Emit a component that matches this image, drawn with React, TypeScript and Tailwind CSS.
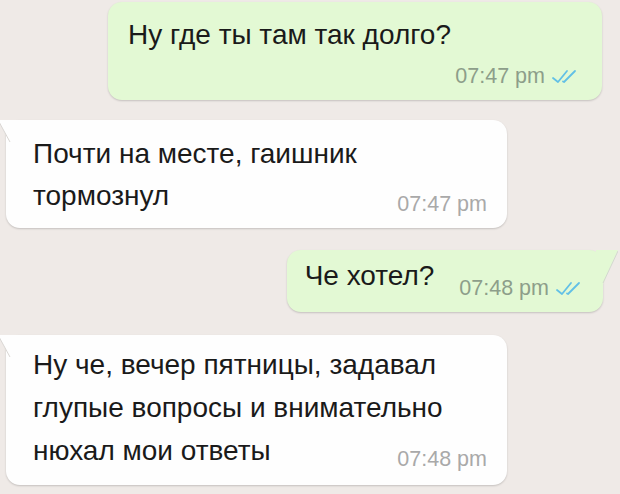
import React from "react";

const font = { fontFamily: '"Liberation Sans", Arial, sans-serif' };

function Ticks() {
  return (
    <svg width="30" height="15" viewBox="0 0 30 15" className="shrink-0">
      <path
        d="M3 9 L8 13 L17 2 M13 12.5 L14 13 L25 2"
        fill="none"
        stroke="#62c0e6"
        strokeWidth="1.8"
        strokeLinecap="round"
        strokeLinejoin="round"
      />
    </svg>
  );
}

function Time({ t, out }: { t: string; out?: boolean }) {
  return (
    <span
      className={`text-[21.5px] leading-[28px] whitespace-nowrap ${
        out ? "text-[#8d9e8a]" : "text-[#a9a9a9]"
      }`}
    >
      {t}
    </span>
  );
}

function Tail() {
  return (
    <svg className="absolute top-0 -left-[8px]" width="22" height="26" viewBox="0 0 22 26">
      <polygon points="0,0 22,0 22,26 14,26" fill="#fefefe" />
      <line x1="0" y1="0" x2="12" y2="22" stroke="#d9d6d3" strokeWidth="1" />
    </svg>
  );
}

function Incoming({
  lines,
  time,
  lh,
  className,
}: {
  lines: string[];
  time: string;
  lh: string;
  className: string;
}) {
  const last = lines[lines.length - 1];
  return (
    <div
      className={`relative ml-[6px] w-[501px] rounded-[14px] bg-[#fefefe] shadow-[0_1px_2px_rgba(0,0,0,0.18)] pl-[27px] pr-[20px] flex flex-col text-[28px] whitespace-nowrap ${lh} ${className}`}
    >
      <Tail />
      {lines.slice(0, -1).map((l) => (
        <div key={l} className="relative">
          {l}
        </div>
      ))}
      <div className="relative flex items-end justify-between">
        <span>{last}</span>
        <span className="translate-y-[6px]">
          <Time t={time} />
        </span>
      </div>
    </div>
  );
}

export default function App() {
  return (
    <div
      className="w-[620px] h-[494px] overflow-hidden bg-[#efeae7] flex flex-col pt-[2px] text-[#1a1a1a]"
      style={font}
    >
      {/* outgoing 1 */}
      <div className="relative self-end mr-[18px] w-[494px] rounded-[14px] bg-[#e3f9d4] shadow-[0_1px_2px_rgba(0,0,0,0.18)] pl-[20px] pr-[22px] pt-[12px] pb-[10px]">
        <div className="text-[28px] leading-[42px] whitespace-nowrap">Ну где ты там так долго?</div>
        <div className="flex items-center justify-end gap-[5px] mt-[6px]">
          <Time t="07:47 pm" out />
          <Ticks />
        </div>
      </div>

      <Incoming
        className="mt-[20px] pt-[13px] pb-[11px]"
        lh="leading-[42px]"
        lines={["Почти на месте, гаишник", "тормознул"]}
        time="07:47 pm"
      />

      {/* outgoing 2 */}
      <div className="relative self-end mr-[17px] mt-[22px] rounded-[14px] bg-[#e3f9d4] shadow-[0_1px_2px_rgba(0,0,0,0.18)] pl-[18px] pr-[19px] pt-[5px] pb-[10px] flex items-start">
        <svg className="absolute top-0 -right-[15px]" width="22" height="34" viewBox="0 0 22 34">
          <polygon points="0,0 22,0 7,34 0,34" fill="#e3f9d4" />
          <line x1="22" y1="1" x2="7" y2="33" stroke="#d3d8cf" strokeWidth="1" />
        </svg>
        <div className="relative shrink-0 whitespace-nowrap text-[28px] leading-[42px]">Че хотел?</div>
        <div className="relative flex items-center gap-[5px] ml-[25px] mt-[19px]">
          <Time t="07:48 pm" out />
          <Ticks />
        </div>
      </div>

      <Incoming
        className="mt-[23px] pt-[8px] pb-[13px]"
        lh="leading-[43px]"
        lines={["Ну че, вечер пятницы, задавал", "глупые вопросы и внимательно", "нюхал мои ответы"]}
        time="07:48 pm"
      />
    </div>
  );
}
